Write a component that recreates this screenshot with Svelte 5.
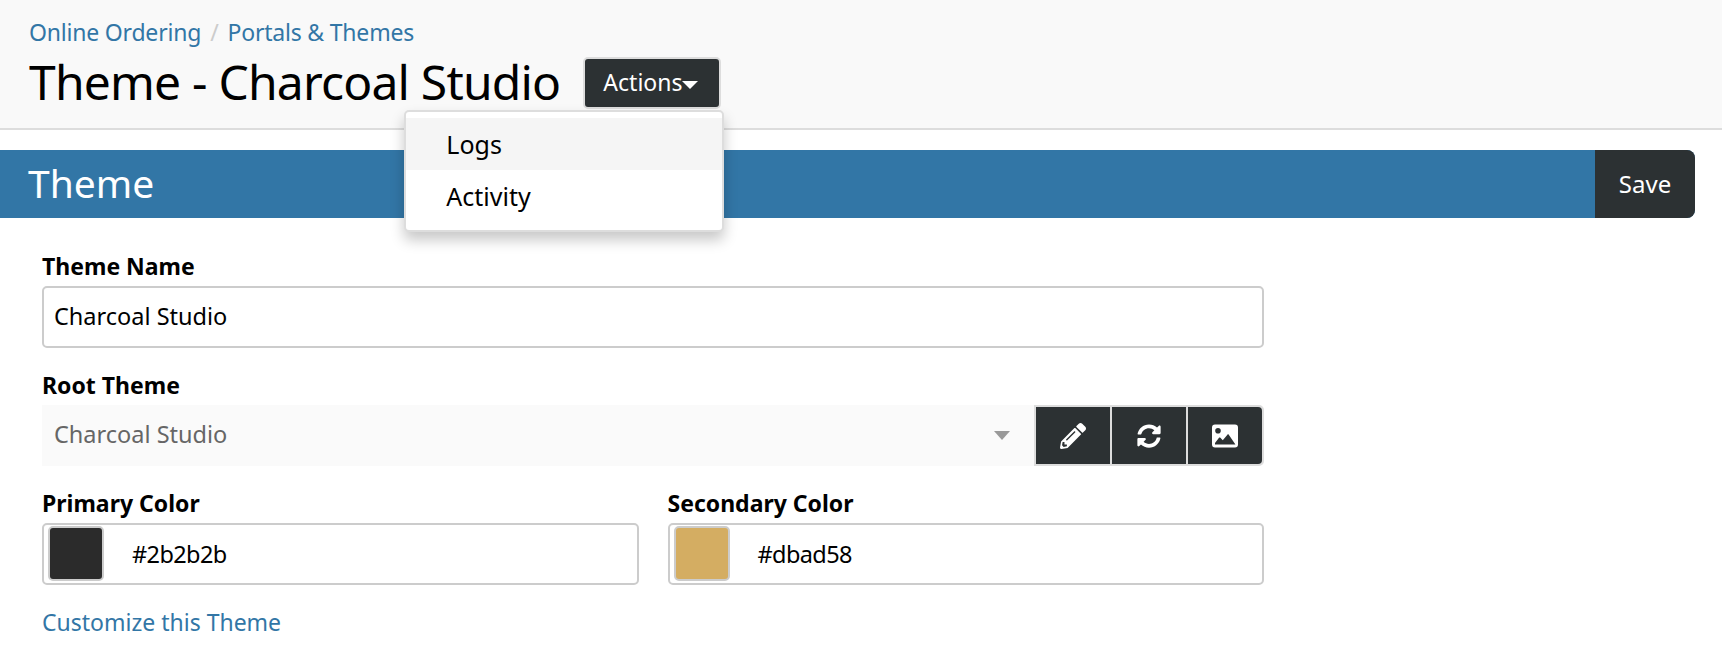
<script>
    const menu = ["Logs", "Activity"];
    const colors = [
        { label: "Primary Color", value: "#2b2b2b" },
        { label: "Secondary Color", value: "#dbad58", swatch: "#d4ad62" }
    ];
</script>

<div class="page">
    <header class="head">
        <nav class="crumbs">
            <a href="#o">Online Ordering</a>
            <span class="sep">/</span>
            <a href="#p">Portals &amp; Themes</a>
        </nav>
        <div class="title-row">
            <h1>Theme - Charcoal Studio</h1>
            <div class="actions">
                <button class="actions-btn">Actions<span class="caret"></span></button>
                <ul class="menu">
                    {#each menu as item, i}
                        <li class:hover={i === 0}>{item}</li>
                    {/each}
                </ul>
            </div>
        </div>
    </header>

    <div class="bar">
        <h2>Theme</h2>
        <button class="save">Save</button>
    </div>

    <form class="form">
        <div class="field">
            <label for="name">Theme Name</label>
            <div class="input name" id="name">Charcoal Studio</div>
        </div>

        <div class="field">
            <label for="root">Root Theme</label>
            <div class="root-row">
                <div class="select" id="root">
                    <span>Charcoal Studio</span>
                    <span class="select-caret"></span>
                </div>
                <div class="tools">
                    <button type="button" class="tool" aria-label="Edit">
                        <svg viewBox="0 0 512 512" width="26" height="26"><path d="M497.9 142.1l-46.1 46.1c-4.7 4.7-12.3 4.7-17 0l-111-111c-4.7-4.7-4.7-12.3 0-17l46.1-46.1c18.7-18.7 49.1-18.7 67.9 0l60.1 60.1c18.8 18.7 18.8 49.1 0 67.9zM284.2 99.8L21.6 362.4.4 483.9c-2.9 16.4 11.4 30.6 27.8 27.8l121.5-21.3 262.6-262.6c4.7-4.7 4.7-12.3 0-17l-111-111c-4.8-4.7-12.4-4.7-17.1 0zM124.1 339.9c-5.5-5.5-5.5-14.3 0-19.8l154-154c5.5-5.5 14.3-5.5 19.8 0s5.5 14.3 0 19.8l-154 154c-5.5 5.5-14.3 5.5-19.8 0zM88 424h48v36.3l-64.5 11.3-31.1-31.1L51.7 376H88v48z"/></svg>
                    </button>
                    <button type="button" class="tool" aria-label="Refresh">
                        <svg viewBox="0 0 512 512" width="24" height="24"><path d="M370.72 133.28C339.458 104.008 298.888 87.962 255.848 88c-77.458.068-144.328 53.178-162.791 126.85-1.344 5.363-6.122 9.15-11.651 9.15H24.103c-7.498 0-13.194-6.807-11.807-14.176C33.933 94.924 134.813 8 256 8c66.448 0 126.791 26.136 171.315 68.685L463.03 40.97C478.149 25.851 504 36.559 504 57.941V192c0 13.255-10.745 24-24 24H345.941c-21.382 0-32.09-25.851-16.971-40.971l41.75-41.749zM32 296h134.059c21.382 0 32.09 25.851 16.971 40.971l-41.75 41.75c31.262 29.273 71.835 45.319 114.876 45.28 77.418-.07 144.315-53.144 162.787-126.849 1.344-5.363 6.122-9.15 11.651-9.15h57.304c7.498 0 13.194 6.807 11.807 14.176C478.067 417.076 377.187 504 256 504c-66.448 0-126.791-26.136-171.315-68.685L48.97 471.03C33.851 486.149 8 475.441 8 454.059V320c0-13.255 10.745-24 24-24z"/></svg>
                    </button>
                    <button type="button" class="tool" aria-label="Image">
                        <svg viewBox="0 0 26 24" width="26" height="24"><path fill-rule="evenodd" d="M3 0.5h20a3 3 0 0 1 3 3v17a3 3 0 0 1-3 3H3a3 3 0 0 1-3-3v-17a3 3 0 0 1 3-3zM6 4a2.8 2.8 0 1 0 0 5.6A2.8 2.8 0 0 0 6 4zM3 20.5h20.4l-6.6-9.8c-.4-.5-1-.5-1.4 0l-4.6 5.6-2.4-2.6c-.4-.4-1-.4-1.4 0L3 19z"/></svg>
                    </button>
                </div>
            </div>
        </div>

        <div class="color-row">
            {#each colors as c}
                <div class="field">
                    <label for={c.label}>{c.label}</label>
                    <div class="input color" id={c.label}>
                        <span class="swatch" style="background: {c.swatch ?? c.value}"></span>
                        <span class="hex">{c.value}</span>
                    </div>
                </div>
            {/each}
        </div>

        <a class="customize" href="#c">Customize this Theme</a>
    </form>
</div>

<style>
    :global(body) {
        margin: 0;
        background: #fff;
    }

    .page {
        font-family: "Noto Sans", "Open Sans", sans-serif;
        color: #000;
        height: 662px;
        overflow: hidden;
    }

    a {
        color: #3276a6;
        text-decoration: none;
    }

    .head {
        background: #f9f9f9;
        border-bottom: 2px solid #ddd;
        padding: 17px 29px 0;
        height: 111px;
    }

    .crumbs {
        font-size: 23px;
        line-height: 30px;
        letter-spacing: -0.2px;
        display: flex;
        gap: 9px;
    }

    .sep {
        color: #ccc;
    }

    .title-row {
        display: flex;
        align-items: center;
        gap: 23px;
        margin-top: 7px;
    }

    h1 {
        margin: 0;
        font-size: 48px;
        font-weight: 400;
        line-height: 54px;
        letter-spacing: -0.8px;
    }

    .actions {
        position: relative;
        margin-top: 3px;
    }

    .actions-btn {
        display: flex;
        align-items: center;
        height: 52px;
        width: 138px;
        padding: 0 0 2px 18px;
        box-sizing: border-box;
        background: #2c3133;
        color: #fff;
        border: 2px solid #ddd;
        border-radius: 5px;
        font: inherit;
        font-size: 23px;
    }

    .caret {
        width: 0;
        height: 0;
        margin-top: 5px;
        border-top: 8px solid #fff;
        border-left: 8px solid transparent;
        border-right: 8px solid transparent;
    }

    .menu {
        position: absolute;
        right: -3px;
        top: 53px;
        width: 320px;
        height: 122px;
        box-sizing: border-box;
        margin: 0;
        padding: 6px 0 0;
        list-style: none;
        background: #fff;
        border: 2px solid #ddd;
        border-radius: 5px;
        box-shadow: 0 8px 14px rgba(0, 0, 0, 0.22);
        font-size: 25px;
        z-index: 2;
    }

    .menu li {
        height: 52px;
        line-height: 52px;
        padding-left: 40px;
    }

    .menu li.hover {
        background: #f5f5f5;
    }

    .bar {
        display: flex;
        align-items: center;
        justify-content: space-between;
        height: 68px;
        margin: 20px 27px 0 0;
        background: #3276a6;
        border-radius: 0 8px 8px 0;
        overflow: hidden;
    }

    h2 {
        margin: 0 0 3px 28px;
        color: #fff;
        font-size: 39px;
        font-weight: 400;
    }

    .save {
        width: 100px;
        height: 100%;
        border: none;
        background: #2c3133;
        color: #fff;
        font: inherit;
        font-size: 24px;
        padding-bottom: 2px;
    }

    .form {
        width: 1222px;
        margin: 0 0 0 42px;
        padding-top: 31px;
    }

    .field {
        margin-bottom: 20px;
    }

    label {
        display: block;
        font-size: 23px;
        font-weight: 700;
        line-height: 34px;
        margin-bottom: 3px;
    }

    .input {
        display: flex;
        align-items: center;
        height: 62px;
        box-sizing: border-box;
        padding: 0 10px;
        background: #fff;
        border: 2px solid #ccc;
        border-radius: 5px;
        font-size: 23.5px;
    }

    .name {
        padding-bottom: 3px;
    }

    .root-row {
        display: flex;
    }

    .select {
        flex: 1;
        display: flex;
        align-items: center;
        justify-content: space-between;
        height: 61px;
        box-sizing: border-box;
        padding: 0 24px 3px 12px;
        background: #fafafa;
        color: #666;
        font-size: 23.5px;
    }

    .select-caret {
        width: 0;
        height: 0;
        margin-top: 3px;
        border-top: 9px solid #999;
        border-left: 8px solid transparent;
        border-right: 8px solid transparent;
    }

    .tools {
        display: flex;
        gap: 2px;
        height: 61px;
        box-sizing: border-box;
        background: #ddd;
        border: 2px solid #ddd;
        border-radius: 0 5px 5px 0;
    }

    .tool {
        display: flex;
        align-items: center;
        justify-content: center;
        width: 74px;
        padding: 0;
        border: none;
        background: #2c3133;
        fill: #fff;
    }

    .tool:last-child {
        border-radius: 0 4px 4px 0;
    }

    .color-row {
        display: grid;
        grid-template-columns: 1fr 1fr;
        gap: 29px;
    }

    .color {
        gap: 28px;
        padding-left: 4px;
    }

    .hex {
        letter-spacing: -0.6px;
    }

    .swatch {
        width: 56px;
        height: 55px;
        margin-top: -2px;
        box-sizing: border-box;
        border: 2px solid #ccc;
        border-radius: 5px;
    }

    .customize {
        display: block;
        margin-top: 2px;
        font-size: 23px;
        line-height: 30px;
    }
</style>
